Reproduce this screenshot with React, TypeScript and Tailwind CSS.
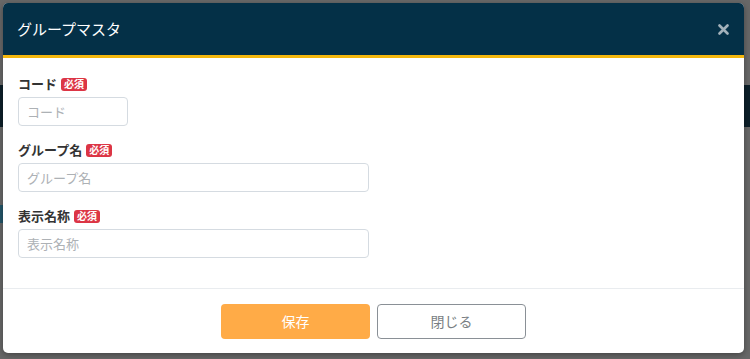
import React from 'react';

function Required() {
  return (
    <span className="ml-[4px] inline-flex h-[13px] items-center rounded-[3px] bg-[#dc3545] px-[3px] text-[10px] font-bold leading-none text-white">
      必須
    </span>
  );
}

interface FieldProps {
  label: string;
  width: string;
}

function Field({ label, width }: FieldProps) {
  return (
    <div className="mb-[14px]">
      <div className="mb-[3px] flex h-[20px] items-center text-[13px] font-semibold text-[#333]">
        {label}
        <Required />
      </div>
      <input
        placeholder={label}
        className={`${width} h-[29px] rounded-[4px] border border-[#d5dbe1] bg-white px-[8px] text-[13px] text-[#333] outline-none placeholder:text-[#adb1b5]`}
      />
    </div>
  );
}

export default function App() {
  return (
    <div className="relative h-[359px] w-[750px] overflow-hidden bg-[#686868] font-['Noto_Sans_CJK_JP','Noto_Sans',sans-serif]">
      {/* dimmed page behind the modal */}
      <div className="h-[85px]" />
      <div className="h-[42px] bg-[#0c1f29]" />
      <div className="h-[78px]" />
      <div className="h-[18px] w-[8px] bg-[#24566a]" />

      <div className="absolute inset-0 pl-[3px] pt-[3px]">
        <div className="w-[741px] overflow-hidden rounded-[5px] bg-white shadow-[0_2px_6px_rgba(0,0,0,0.35)]">
          <header className="flex h-[55px] items-center justify-between border-b-[3px] border-[#f4b70d] bg-[#043047] pl-[14px] pr-[16px]">
            <h1 className="text-[15px] font-normal text-white">グループマスタ</h1>
            <svg width="11" height="11" viewBox="0 0 11 11" className="mr-[-1px]">
              <path d="M1.5 1.5 L9.5 9.5 M9.5 1.5 L1.5 9.5" stroke="#a3b1ba" strokeWidth="2.6" strokeLinecap="round" />
            </svg>
          </header>

          <section className="px-[15px] pb-[16px] pt-[16px]">
            <Field label="コード" width="w-[110px]" />
            <Field label="グループ名" width="w-[351px]" />
            <Field label="表示名称" width="w-[351px]" />
          </section>

          <footer className="flex h-[65px] justify-center gap-[7px] border-t border-[#e9ecef] pt-[15px]">
            <button className="h-[35px] w-[149px] rounded-[4px] bg-[#ffab47] text-[14px] text-white">保存</button>
            <button className="h-[35px] w-[149px] rounded-[4px] border border-[#8a9096] bg-white text-[14px] text-[#7a7f84]">閉じる</button>
          </footer>
        </div>
      </div>
    </div>
  );
}
